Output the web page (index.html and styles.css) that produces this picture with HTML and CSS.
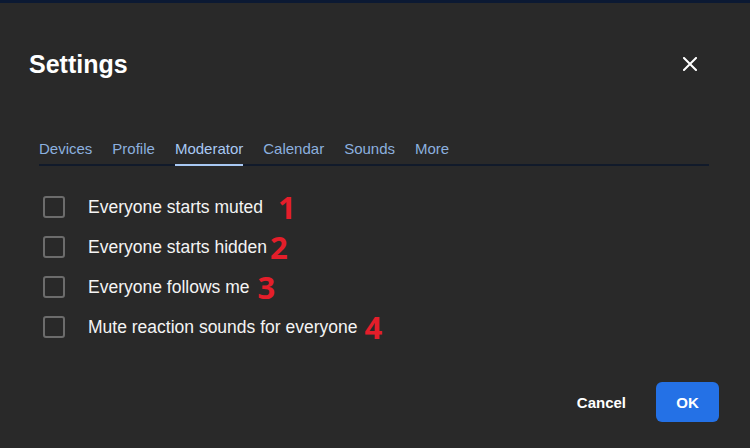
FILE: index.html
```html
<!DOCTYPE html>
<html lang="en">
<head>
<meta charset="utf-8">
<title>Settings</title>
<link rel="stylesheet" href="styles.css">
</head>
<body>
<div class="topbar"></div>
<div class="dialog">
  <header class="header">
    <h1 class="title">Settings</h1>
    <button class="close" aria-label="Close">
      <svg width="14" height="14" viewBox="0 0 14 14"><path d="M1 1L13 13M13 1L1 13" stroke="#ffffff" stroke-width="2" stroke-linecap="square" fill="none"/></svg>
    </button>
  </header>
  <nav class="tabs">
    <span class="tab">Devices</span>
    <span class="tab">Profile</span>
    <span class="tab active">Moderator</span>
    <span class="tab">Calendar</span>
    <span class="tab">Sounds</span>
    <span class="tab">More</span>
  </nav>
  <ul class="options">
    <li class="option"><span class="box"></span><span class="label">Everyone starts muted</span><span class="num n1">1</span></li>
    <li class="option"><span class="box"></span><span class="label">Everyone starts hidden</span><span class="num n2">2</span></li>
    <li class="option"><span class="box"></span><span class="label">Everyone follows me</span><span class="num n3">3</span></li>
    <li class="option"><span class="box"></span><span class="label">Mute reaction sounds for everyone</span><span class="num n4">4</span></li>
  </ul>
  <footer class="footer">
    <button class="btn cancel">Cancel</button>
    <button class="btn ok">OK</button>
  </footer>
</div>
</body>
</html>
```
FILE: styles.css
```css
html, body {
  margin: 0;
  padding: 0;
  background: #292929;
  font-family: "Liberation Sans", Arial, sans-serif;
  color: #f2f2f2;
  height: 448px;
  overflow: hidden;
}
.topbar {
  height: 3px;
  background: #0b1933;
}
.dialog {
  display: flex;
  flex-direction: column;
}
.header {
  display: flex;
  align-items: center;
  justify-content: space-between;
  height: 30px;
  margin-top: 46px;
  padding: 0 53px 0 29px;
}
.title {
  margin: 0;
  font-size: 25px;
  font-weight: 700;
  line-height: 30px;
  color: #ffffff;
}
.close {
  background: none;
  border: 0;
  padding: 0;
  width: 14px;
  height: 14px;
  display: flex;
}
.tabs {
  display: flex;
  gap: 20px;
  margin: 61px 41px 0 39px;
  border-bottom: 2px solid #111a2a;
}
.tab {
  font-size: 15px;
  line-height: 18px;
  color: #8cb0df;
  padding-bottom: 6px;
  margin-bottom: -2px;
  border-bottom: 2px solid transparent;
}
.tab.active {
  color: #a8c8f3;
  border-bottom-color: #a8c8f3;
}
.options {
  list-style: none;
  margin: 21px 0 0 0;
  padding: 0 0 0 43px;
}
.option {
  display: flex;
  align-items: center;
  height: 40px;
}
.box {
  box-sizing: border-box;
  width: 22px;
  height: 22px;
  border: 2px solid #6c6c6c;
  border-radius: 3px;
  margin-right: 23px;
}
.label {
  font-size: 17.5px;
  color: #f4f4f4;
}
.num {
  font-family: "Open Sans", "DejaVu Sans", sans-serif;
  font-weight: 700;
  font-size: 31px;
  line-height: 30px;
  color: #e41e2a;
}
.n1 { margin-left: 15px; }
.n2 { margin-left: 3px; }
.n3 { margin-left: 8px; }
.n4 { margin-left: 7px; }
.footer {
  display: flex;
  justify-content: flex-end;
  align-items: center;
  margin-top: 35px;
  padding-right: 31px;
}
.btn {
  font-family: "Liberation Sans", Arial, sans-serif;
  font-weight: 700;
  font-size: 15px;
  color: #ffffff;
  border: 0;
  cursor: pointer;
}
.cancel {
  background: none;
  padding: 0;
  margin-right: 30px;
}
.ok {
  width: 63px;
  height: 40px;
  background: #2471e6;
  border-radius: 6px;
}
```
